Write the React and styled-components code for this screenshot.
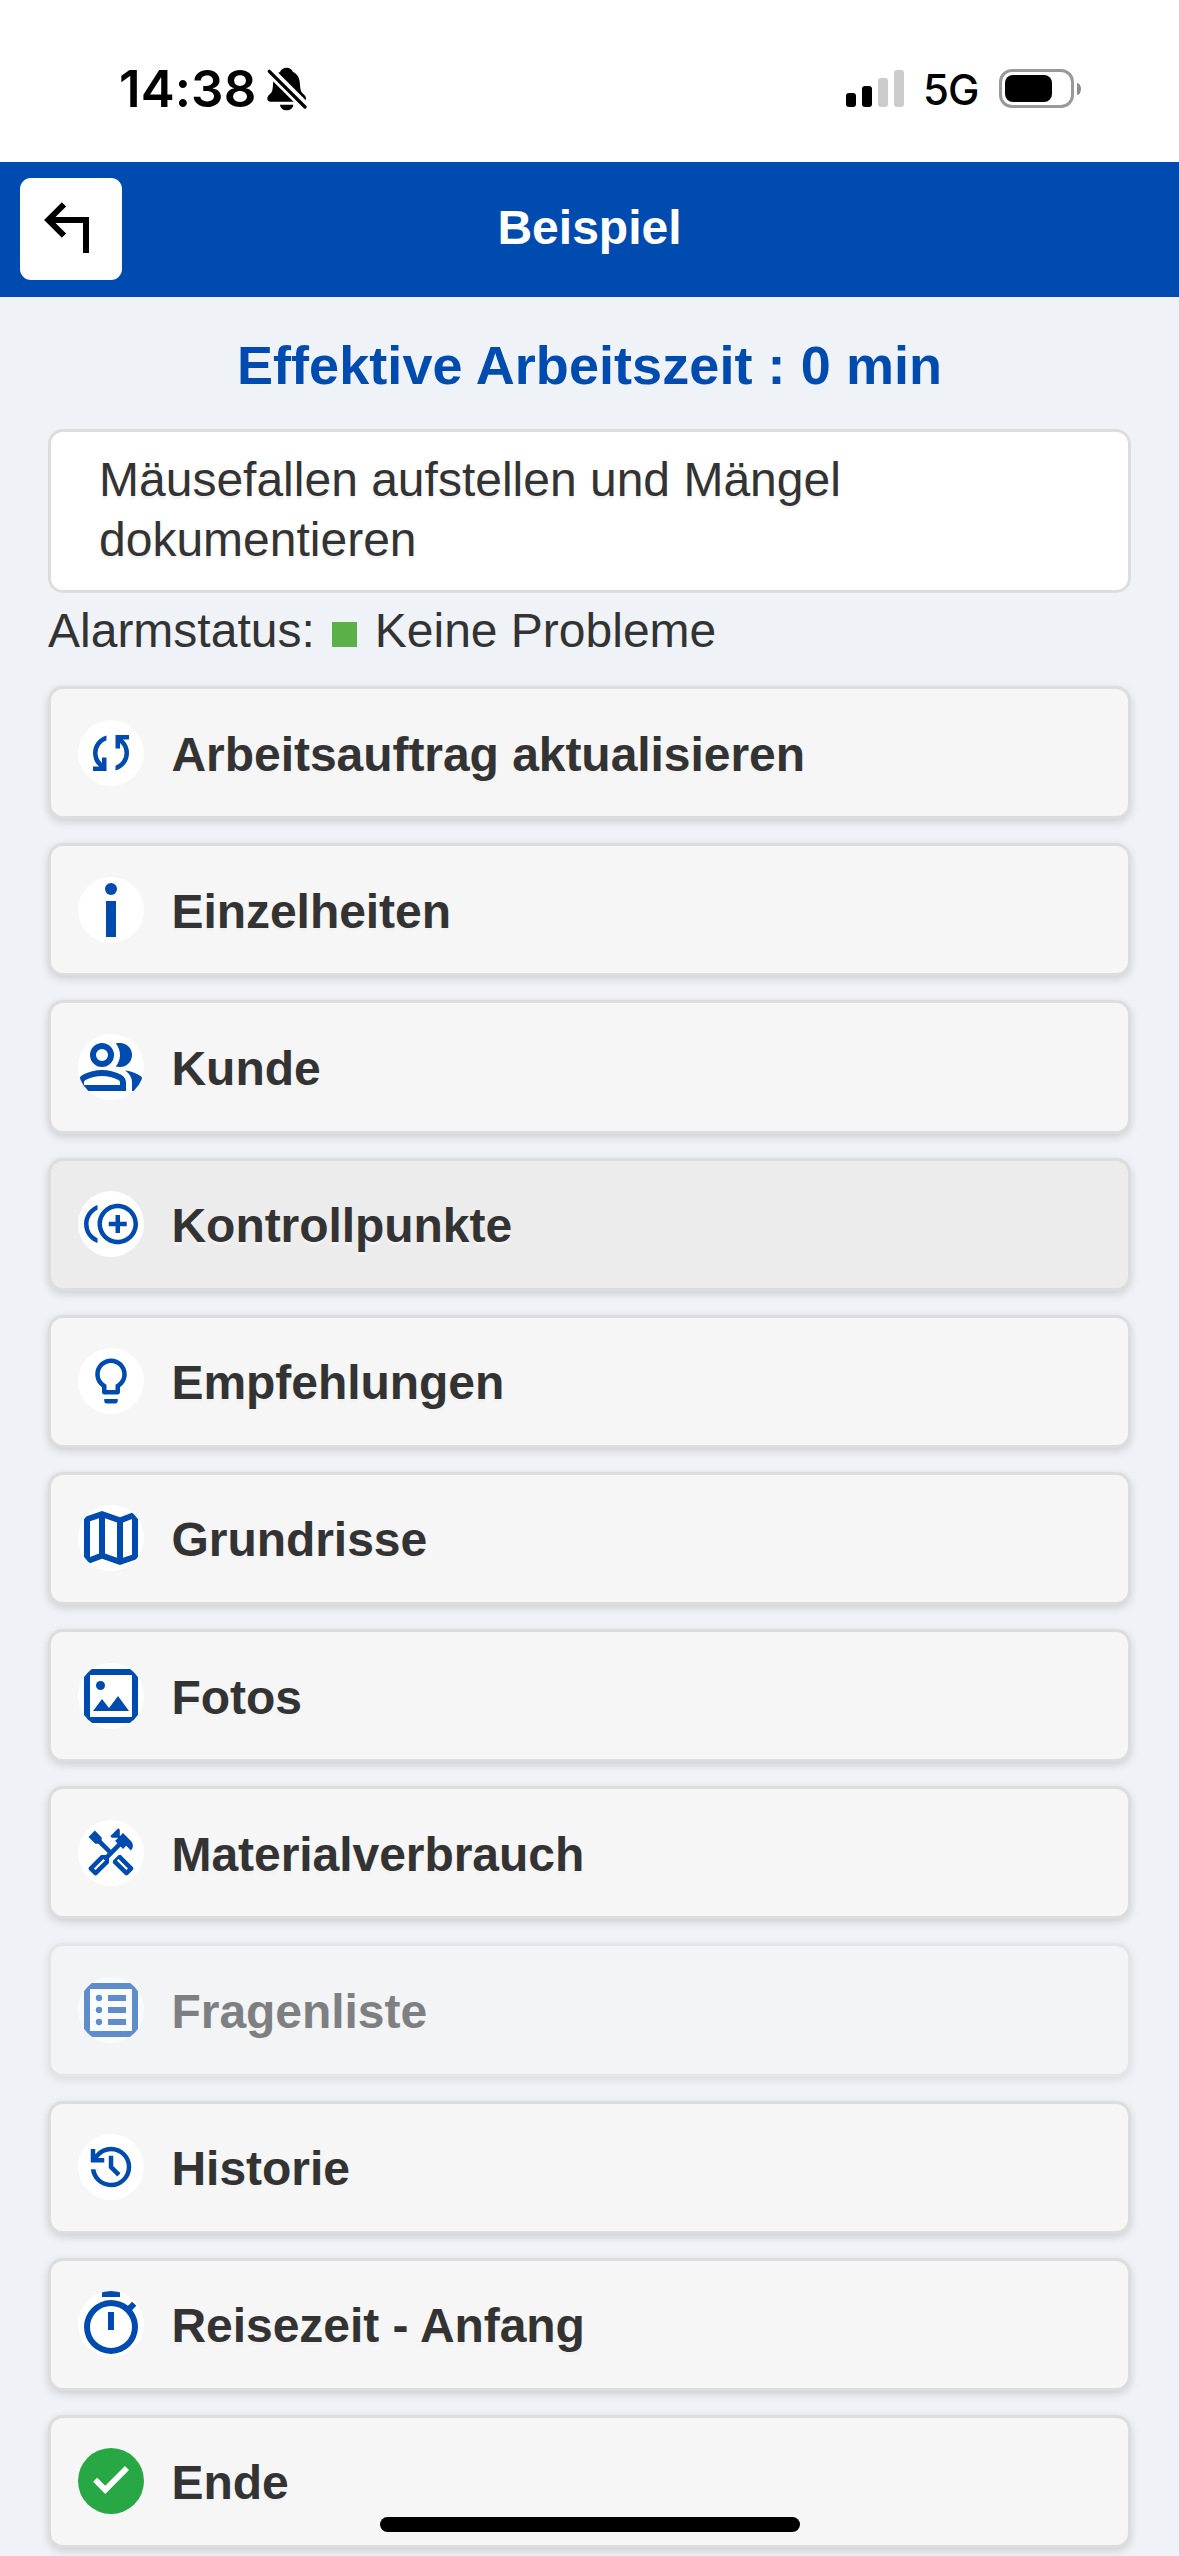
import React from "react";
import styled, { createGlobalStyle } from "styled-components";
import {
  MdControlPointDuplicate,
  MdLightbulbOutline,
  MdOutlineHandyman
} from "react-icons/md";

const GlobalStyle = createGlobalStyle`
  * {
    box-sizing: border-box;
  }
  body {
    margin: 0;
    background-color: #eff3f8;
    color: #333;
    font-family: "Liberation Sans", Arial, sans-serif;
    font-size: 48px;
    overflow: hidden;
  }
`;

const Screen = styled.div`
  width: 1179px;
  height: 2556px;
  overflow: hidden;
`;

const StatusBar = styled.div`
  height: 162px;
  padding: 15px 98px 0 119px;
  display: flex;
  align-items: center;
  justify-content: space-between;
  background-color: white;
  color: black;
  font-family: Inter, sans-serif;
`;

const StatusGroup = styled.div`
  display: flex;
  align-items: center;
`;

const Clock = styled.span`
  width: 135px;
  font-size: 51px;
  font-weight: 600;
  line-height: 60px;
  letter-spacing: 0.1px;
  white-space: nowrap;
`;

const BellIcon = styled.svg`
  width: 40px;
  height: 44px;
  margin-left: 13px;
`;

const Signal = styled.div`
  height: 37px;
  display: flex;
  align-items: flex-end;
  gap: 6px;
`;

const SignalBar = styled.span`
  width: 10px;
  height: ${props => props.$height}px;
  border-radius: 3px;
  background-color: ${props => (props.$active ? "black" : "#ccc")};
`;

const Network = styled.span`
  width: 56px;
  margin: 2px 0 0 19px;
  font-size: 42px;
  font-weight: 500;
  line-height: 50px;
  letter-spacing: -1px;
`;

const Battery = styled.div`
  width: 75px;
  height: 39px;
  margin-left: 20px;
  padding: 3px;
  border: 3px solid #999;
  border-radius: 13px;
`;

const BatteryLevel = styled.div`
  width: 47px;
  height: 27px;
  border-radius: 8px;
  background-color: black;
`;

const BatteryTip = styled.span`
  width: 4px;
  height: 12px;
  margin-left: 3px;
  border-radius: 0 4px 4px 0 / 0 6px 6px 0;
  background-color: #8c8c8c;
`;

const Header = styled.header`
  height: 135px;
  padding: 0 20px 1px;
  display: grid;
  grid-template-columns: 102px 1fr 102px;
  align-items: center;
  background-color: #004bb0;
  color: white;
`;

const BackButton = styled.button`
  width: 102px;
  height: 102px;
  padding: 0;
  border: 0;
  border-radius: 11px;
  background-color: white;
  svg {
    display: block;
  }
`;

const Title = styled.h1`
  margin: 0;
  padding-bottom: 2px;
  font-size: 48px;
  line-height: 60px;
  text-align: center;
`;

const Content = styled.main`
  padding: 0 48px;
`;

const WorkTime = styled.h2`
  margin: 0;
  padding: 34px 0 30px;
  color: #004bb0;
  font-size: 54px;
  line-height: 68px;
  letter-spacing: 0.07px;
  text-align: center;
`;

const Note = styled.div`
  height: 164px;
  padding: 18px 48px 0;
  border: 3px solid #ddd;
  border-radius: 15px;
  background-color: white;
  line-height: 60px;
  text-shadow: 0 3px 0 #f3f3f3;
`;

const Alarm = styled.div`
  height: 93px;
  padding-top: 8px;
  display: flex;
  line-height: 60px;
`;

const AlarmColor = styled.span`
  width: 25px;
  height: 25px;
  margin: 21px 18px 0 17px;
  background-color: #5bb147;
`;

const Menu = styled.ul`
  margin: 0;
  padding: 0;
  display: flex;
  flex-direction: column;
  gap: 24px;
  list-style: none;
`;

const MenuItem = styled.li`
  height: 133.18px;
  padding: 0 27px;
  display: flex;
  align-items: center;
  gap: 27.5px;
  border: 3px solid #ddd;
  border-radius: 15px;
  background-color: ${props => (props.$pressed ? "#ececec" : "#f6f6f6")};
  box-shadow: 0 3px 9px rgba(0, 0, 0, 0.15);
  font-weight: bold;
  text-shadow: 0 3px 0 #f3f3f3;
  opacity: ${props => (props.$disabled ? 0.6 : 1)};
`;

const IconCircle = styled.span`
  width: 66px;
  height: 66px;
  flex-shrink: 0;
  display: flex;
  align-items: center;
  justify-content: center;
  overflow: hidden;
  border-radius: 50%;
  background-color: ${props => (props.$done ? "#28a745" : "white")};
  color: ${props => (props.$done ? "white" : "#004bb0")};
  svg {
    flex-shrink: 0;
  }
`;

const Label = styled.span`
  padding-top: 4px;
  line-height: 60px;
  letter-spacing: -0.05px;
`;

const HomeIndicator = styled.div`
  position: fixed;
  left: 380px;
  bottom: 24px;
  width: 420px;
  height: 15px;
  border-radius: 8px;
  background-color: black;
`;

const Symbol = ({ size = 54, d }) => (
  <svg width={size} height={size} viewBox="0 -960 960 960" fill="currentColor">
    <path d={d} />
  </svg>
);

const InfoIcon = () => (
  <svg width="66" height="66" viewBox="0 0 198 198" fill="currentColor">
    <circle cx="99" cy="36" r="18" />
    <path d="M84 72h30v108H84z" />
  </svg>
);

const PhotoIcon = () => (
  <svg width="66" height="66" viewBox="0 0 198 198" fill="currentColor">
    <path d="M18 18h162v162H18zM36 36v126h126V36z" fillRule="evenodd" />
    <circle cx="67.5" cy="67.5" r="13.5" />
    <path d="M45 144l27-36 21 27 27-36 33 45z" />
  </svg>
);

const ListIcon = () => (
  <svg width="66" height="66" viewBox="0 0 198 198" fill="currentColor">
    <path d="M18 18h162v162H18zM36 36v126h126V36z" fillRule="evenodd" />
    <circle cx="63" cy="63" r="9.5" />
    <circle cx="63" cy="99" r="9.5" />
    <circle cx="63" cy="135" r="9.5" />
    <path d="M90 54h54v18H90zM90 90h54v18H90zM90 126h54v18H90z" />
  </svg>
);

const SYNC =
  "M160-160v-80h110l-16-14q-52-46-73-105t-21-119q0-111 66.5-197.5T400-790v84q-72 26-116 88.5T240-478q0 45 17 87.5t53 78.5l10 10v-98h80v240H160Zm400-10v-84q72-26 116-88.5T720-482q0-45-17-87.5T650-648l-10-10v98h-80v-240h240v80H690l16 14q49 49 71.5 106.5T800-482q0 111-66.5 197.5T560-170Z";
const GROUP =
  "M40-160v-112q0-34 17.5-62.5T104-378q62-31 126-46.5T360-440q66 0 130 15.5T616-378q29 15 46.5 43.5T680-272v112H40Zm720 0v-120q0-44-24.5-84.5T666-434q51 6 96 20.5t84 35.5q36 20 55 44.5t19 53.5v120H760ZM360-480q-66 0-113-47t-47-113q0-66 47-113t113-47q66 0 113 47t47 113q0 66-47 113t-113 47Zm400-160q0 66-47 113t-113 47q-11 0-28-2.5t-28-5.5q27-32 41.5-71t14.5-81q0-42-14.5-81T544-792q14-5 28-6.5t28-1.5q66 0 113 47t47 113ZM120-240h480v-32q0-11-5.5-20T580-306q-54-27-109-40.5T360-360q-56 0-111 13.5T140-306q-9 5-14.5 14t-5.5 20v32Zm240-320q33 0 56.5-23.5T440-640q0-33-23.5-56.5T360-720q-33 0-56.5 23.5T280-640q0 33 23.5 56.5T360-560Z";
const MAP =
  "m600-120-240-84-186 72q-20 8-37-4.5T120-170v-560q0-13 7.5-23t20.5-15l212-72 240 84 186-72q20-8 37 4.5t17 33.5v560q0 13-7.5 23T812-192l-212 72Zm-40-98v-468l-160-56v468l160 56Zm80 0 120-40v-474l-120 46v468Zm-440-10 120-46v-468l-120 40v474Z";
const HISTORY =
  "M480-120q-138 0-240.5-91.5T122-440h82q14 104 92.5 172T480-200q117 0 198.5-81.5T760-480q0-117-81.5-198.5T480-760q-69 0-129 32t-101 88h110v80H120v-240h80v94q51-64 124.5-99T480-840q75 0 140.5 28.5t114 77q48.5 48.5 77 114T840-480q0 75-28.5 140.5t-77 114q-48.5 48.5-114 77T480-120Zm112-192L440-464v-216h80v184l128 128-56 56Z";
const TIMER =
  "M360-840v-80h240v80H360Zm80 440h80v-240h-80v240Zm40 320q-74 0-139.5-28.5T226-186q-49-49-77.5-114.5T120-440q0-74 28.5-139.5T226-694q49-49 114.5-77.5T480-800q62 0 119 20t107 58l56-56 56 56-56 56q38 50 58 107t20 119q0 74-28.5 139.5T734-186q-49 49-114.5 77.5T480-80Zm0-80q116 0 198-82t82-198q0-116-82-198t-198-82q-116 0-198 82t-82 198q0 116 82 198t198 82Z";
const CHECK = "M378-250 162-466l72-72 144 144 350-352 72 72-422 424Z";

const items = [
  { label: "Arbeitsauftrag aktualisieren", icon: <Symbol d={SYNC} /> },
  { label: "Einzelheiten", icon: <InfoIcon /> },
  { label: "Kunde", icon: <Symbol size={72} d={GROUP} /> },
  {
    label: "Kontrollpunkte",
    icon: <MdControlPointDuplicate size={54} />,
    pressed: true
  },
  { label: "Empfehlungen", icon: <MdLightbulbOutline size={54} /> },
  { label: "Grundrisse", icon: <Symbol size={72} d={MAP} /> },
  { label: "Fotos", icon: <PhotoIcon /> },
  { label: "Materialverbrauch", icon: <MdOutlineHandyman size={54} /> },
  { label: "Fragenliste", icon: <ListIcon />, disabled: true },
  { label: "Historie", icon: <Symbol d={HISTORY} /> },
  { label: "Reisezeit - Anfang", icon: <Symbol size={72} d={TIMER} /> },
  { label: "Ende", icon: <Symbol d={CHECK} />, done: true }
];

const PhoneStatus = () => (
  <StatusBar>
    <StatusGroup>
      <Clock>14:38</Clock>
      <BellIcon viewBox="802 199 120 132">
        <path d="M861 201c-10 0-17 5-20 13-14 6-20 18-21 38-1 15-2 22-10 29-6 6-7 9-7 13 0 6 4 9 10 9h95c6 0 11-3 11-9 0-5-2-9-8-14-8-8-9-14-10-28-1-20-7-32-21-38-3-8-9-13-19-13zM841 312h40c-1 10-9 17-20 17s-19-7-20-17z" />
        <path d="M800 201L924 325" stroke="white" strokeWidth="29" />
        <path
          d="M809 212L916 319"
          stroke="black"
          strokeWidth="10"
          strokeLinecap="round"
        />
      </BellIcon>
    </StatusGroup>
    <StatusGroup>
      <Signal>
        <SignalBar $height={14} $active />
        <SignalBar $height={21} $active />
        <SignalBar $height={29} />
        <SignalBar $height={37} />
      </Signal>
      <Network>5G</Network>
      <Battery>
        <BatteryLevel />
      </Battery>
      <BatteryTip />
    </StatusGroup>
  </StatusBar>
);

export default () => (
  <Screen>
    <GlobalStyle />
    <PhoneStatus />
    <Header>
      <BackButton aria-label="Zurück">
        <svg
          width="102"
          height="102"
          viewBox="0 0 306 306"
          fill="none"
          stroke="black"
          strokeWidth="18"
        >
          <path d="M132 79L85 126l47 47M85 126h113v99" />
        </svg>
      </BackButton>
      <Title>Beispiel</Title>
    </Header>
    <Content>
      <WorkTime>Effektive Arbeitszeit : 0 min</WorkTime>
      <Note>
        Mäusefallen aufstellen und Mängel
        <br />
        dokumentieren
      </Note>
      <Alarm>
        Alarmstatus:
        <AlarmColor />
        Keine Probleme
      </Alarm>
      <Menu>
        {items.map(({ label, icon, pressed, disabled, done }) => (
          <MenuItem key={label} $pressed={pressed} $disabled={disabled}>
            <IconCircle $done={done}>{icon}</IconCircle>
            <Label>{label}</Label>
          </MenuItem>
        ))}
      </Menu>
    </Content>
    <HomeIndicator />
  </Screen>
);
